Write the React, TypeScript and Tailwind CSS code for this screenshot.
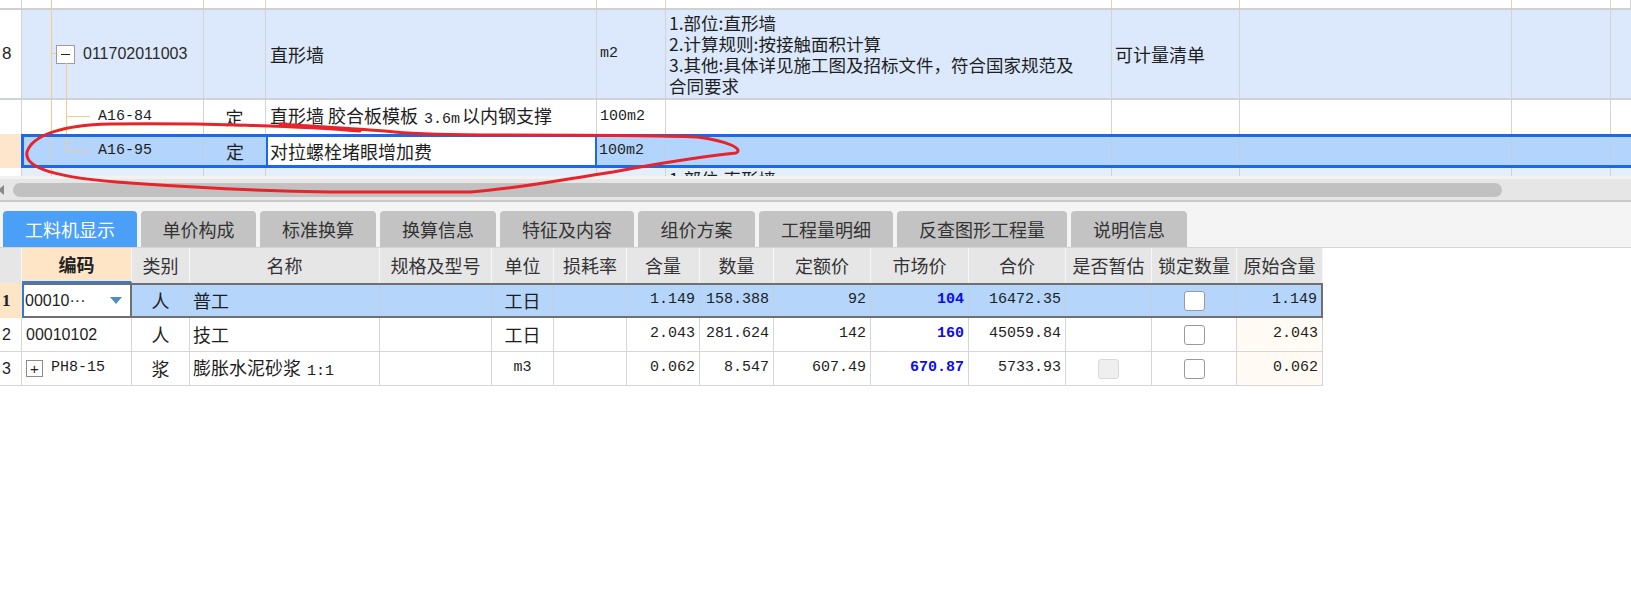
import React from "react";

const cjk = "font-['Noto_Sans_CJK_SC',sans-serif]";
const mono = "font-['Liberation_Mono',monospace] text-[15px]";
const sans = "font-['Liberation_Sans',sans-serif] text-[16px]";

const topCols = ["w-[22px]", "w-[182px]", "w-[62px]", "w-[331px]", "w-[69px]", "w-[446px]", "w-[128px]", "w-[272px]", "w-[99px]", "w-[20px]"];

const Orange = ({ className }: { className: string }) => <span className={`absolute bg-[#fbc98d] ${className}`} />;

function TopGrid() {
  return (
    <div className="text-[18px] text-[#1e1e1e]">
      {/* partial row on top */}
      <div className="flex h-[10px] border-b-2 border-[#d0d0d0]">
        {topCols.map((w, i) => (
          <div key={i} className={`${w} relative shrink-0 border-r border-[#d3d3d3]`}>
            {i === 1 && <Orange className="left-[29px] top-0 bottom-0 w-px" />}
          </div>
        ))}
      </div>

      {/* row 8 */}
      <div className="flex h-[90px] border-b-2 border-[#cfd3d8] bg-[#dce9fc]">
        <div className={`w-[22px] shrink-0 border-r border-[#d3d3d3] bg-white flex items-center pl-[2px] ${sans} text-[17px]`}>8</div>
        <div className="w-[182px] shrink-0 relative border-r border-[#d3d3d3] flex items-center pl-[34px]">
          <Orange className="left-[29px] top-0 bottom-0 w-px" />
          <Orange className="left-[29px] top-[43px] w-[5px] h-px" />
          <Orange className="left-[44px] top-[53px] bottom-0 w-px" />
          <span className="w-[19px] h-[19px] border border-[#9c9c9c] bg-white flex items-center justify-center">
            <span className="w-[9px] h-px bg-[#222]" />
          </span>
          <span className={`ml-[8px] ${sans} text-[#2a2a2a]`}>011702011003</span>
        </div>
        <div className="w-[62px] shrink-0 border-r border-[#d3d3d3]" />
        <div className="w-[331px] shrink-0 border-r border-[#d3d3d3] flex items-center pl-[4px]">直形墙</div>
        <div className={`w-[69px] shrink-0 border-r border-[#d3d3d3] flex items-center pl-[3px] ${mono}`}>m2</div>
        <div className="w-[446px] shrink-0 border-r border-[#d3d3d3] flex flex-col justify-center pl-[3px] text-[17.5px] leading-[21px]">
          <div>1.部位:直形墙</div>
          <div>2.计算规则:按接触面积计算</div>
          <div>3.其他:具体详见施工图及招标文件，符合国家规范及</div>
          <div>合同要求</div>
        </div>
        <div className="w-[128px] shrink-0 border-r border-[#d3d3d3] flex items-center pl-[3px]">可计量清单</div>
        <div className="w-[272px] shrink-0 border-r border-[#d3d3d3]" />
        <div className="w-[99px] shrink-0 border-r border-[#d3d3d3]" />
        <div className="w-[20px] shrink-0" />
      </div>

      {/* A16-84 */}
      <div className="flex h-[34px] bg-white">
        <div className="w-[22px] shrink-0 border-r border-[#d3d3d3]" />
        <div className={`w-[182px] shrink-0 relative border-r border-[#d3d3d3] flex items-center pl-[76px] ${mono}`}>
          <Orange className="left-[29px] top-0 bottom-0 w-px" />
          <Orange className="left-[44px] top-0 bottom-0 w-px" />
          <Orange className="left-[44px] top-[16px] w-[24px] h-px" />
          A16-84
        </div>
        <div className="w-[62px] shrink-0 border-r border-[#d3d3d3] flex items-center justify-center">定</div>
        <div className="w-[331px] shrink-0 border-r border-[#d3d3d3] flex items-center pl-[4px] whitespace-nowrap">
          <span>
            直形墙 胶合板模板 <span className={`${mono} mx-[2px]`}>3.6m</span>以内钢支撑
          </span>
        </div>
        <div className={`w-[69px] shrink-0 border-r border-[#d3d3d3] flex items-center pl-[3px] ${mono}`}>100m2</div>
        <div className="w-[446px] shrink-0 border-r border-[#d3d3d3]" />
        <div className="w-[128px] shrink-0 border-r border-[#d3d3d3]" />
        <div className="w-[272px] shrink-0 border-r border-[#d3d3d3]" />
        <div className="w-[99px] shrink-0 border-r border-[#d3d3d3]" />
        <div className="w-[20px] shrink-0" />
      </div>

      {/* selected A16-95 */}
      <div className="flex h-[34px]">
        <div className="w-[21px] shrink-0 bg-[#fde6cb]" />
        <div className="flex flex-1 border-y-[3px] border-l-[3px] border-[#1a6ae8] bg-[#b3d4fc]">
          <div className={`w-[180px] shrink-0 relative border-r border-[#c2cedd] flex items-center pl-[74px] ${mono}`}>
            <Orange className="left-[27px] top-0 bottom-0 w-px opacity-60" />
            <Orange className="left-[42px] top-0 h-[14px] w-px" />
            <Orange className="left-[42px] top-[14px] w-[24px] h-px" />
            A16-95
          </div>
          <div className="w-[62px] shrink-0 flex items-center justify-center">定</div>
          <div className="w-[331px] shrink-0 bg-white border-x-2 border-[#1a6ae8] flex items-center pl-[2px]">对拉螺栓堵眼增加费</div>
          <div className={`w-[69px] shrink-0 border-r border-[#c2cedd] flex items-center pl-[2px] ${mono}`}>100m2</div>
          <div className="w-[446px] shrink-0 border-r border-[#c2cedd]" />
          <div className="w-[128px] shrink-0 border-r border-[#c2cedd]" />
          <div className="w-[272px] shrink-0 border-r border-[#c2cedd]" />
          <div className="w-[99px] shrink-0 border-r border-[#c2cedd]" />
          <div className="flex-1" />
        </div>
      </div>

      {/* partial row below */}
      <div className="flex h-[8px] overflow-hidden">
        <div className="w-[22px] shrink-0 border-r border-[#d3d3d3] bg-white" />
        <div className="w-[182px] shrink-0 relative border-r border-[#d3d3d3] bg-[#e5effc]">
          <Orange className="left-[29px] top-0 bottom-0 w-px" />
        </div>
        <div className="w-[62px] shrink-0 border-r border-[#d3d3d3] bg-[#e5effc]" />
        <div className="w-[331px] shrink-0 border-r border-[#d3d3d3] bg-[#e5effc]" />
        <div className="w-[69px] shrink-0 border-r border-[#d3d3d3] bg-[#e5effc]" />
        <div className="w-[446px] shrink-0 border-r border-[#d3d3d3] bg-[#e5effc] pl-[3px] text-[17.5px] leading-[21px]">1.部位:直形墙</div>
        <div className="w-[128px] shrink-0 border-r border-[#d3d3d3] bg-[#e5effc]" />
        <div className="w-[272px] shrink-0 border-r border-[#d3d3d3] bg-[#e5effc]" />
        <div className="w-[99px] shrink-0 border-r border-[#d3d3d3] bg-[#e5effc]" />
        <div className="w-[20px] shrink-0 bg-[#e5effc]" />
      </div>

      {/* horizontal scrollbar */}
      <div className="h-[3px] bg-[#f2f2f2]" />
      <div className="h-[21px] bg-[#e6e6e6] flex items-center">
        <span className="-ml-[2px] w-0 h-0 border-y-[5px] border-y-transparent border-r-[6px] border-r-[#8a8a8a]" />
        <span className="ml-[9px] w-[1489px] h-[14px] rounded-full bg-[#c1c1c1]" />
      </div>
    </div>
  );
}

const tabs = ["工料机显示", "单价构成", "标准换算", "换算信息", "特征及内容", "组价方案", "工程量明细", "反查图形工程量", "说明信息"];
const tabW = ["w-[134px]", "w-[115px]", "w-[116px]", "w-[116px]", "w-[134px]", "w-[117px]", "w-[134px]", "w-[170px]", "w-[116px]"];

function Tabs() {
  return (
    <div className="border-t-2 border-[#c9c9c9] border-b border-b-[#d4d4d4] bg-[#f4f4f4] pt-[9px]">
      <div className="flex gap-[4px] pl-[3px]">
        {tabs.map((t, i) => (
          <div
            key={t}
            className={`${tabW[i]} h-[36px] rounded-t-[4px] flex items-center justify-center text-[18px] ${i === 0 ? "bg-[#4aa0f6] text-white" : "bg-[#c3c3c3] text-[#333]"}`}
          >
            {t}
          </div>
        ))}
      </div>
    </div>
  );
}

const Check = ({ disabled }: { disabled?: boolean }) => (
  <span className={`w-[21px] h-[20px] rounded-[3px] border ${disabled ? "border-[#d9d9d9] bg-[#efefef]" : "border-[#9a9a9a] bg-white"}`} />
);

const heads = ["编码", "类别", "名称", "规格及型号", "单位", "损耗率", "含量", "数量", "定额价", "市场价", "合价", "是否暂估", "锁定数量", "原始含量"];
const headW = ["w-[110px]", "w-[58px]", "w-[190px]", "w-[112px]", "w-[62px]", "w-[73px]", "w-[73px]", "w-[74px]", "w-[97px]", "w-[98px]", "w-[97px]", "w-[86px]", "w-[85px]", "w-[86px]"];

type Row = {
  n: string;
  code: React.ReactNode;
  kind: string;
  name: React.ReactNode;
  unit: React.ReactNode;
  qty: string;
  amount: string;
  base: string;
  market: string;
  total: string;
  est?: boolean;
  orig: string;
};

const rows: Row[] = [
  { n: "2", code: "00010102", kind: "人", name: "技工", unit: "工日", qty: "2.043", amount: "281.624", base: "142", market: "160", total: "45059.84", orig: "2.043" },
  {
    n: "3",
    code: (
      <span className="flex items-center">
        <span className="w-[17px] h-[17px] border border-[#8c8c8c] flex items-center justify-center text-[15px] leading-none">+</span>
        <span className={`ml-[8px] ${mono}`}>PH8-15</span>
      </span>
    ),
    kind: "浆",
    name: (
      <span>
        膨胀水泥砂浆 <span className={`${mono} ml-[2px]`}>1:1</span>
      </span>
    ),
    unit: <span className={mono}>m3</span>,
    qty: "0.062",
    amount: "8.547",
    base: "607.49",
    market: "670.87",
    total: "5733.93",
    est: true,
    orig: "0.062",
  },
];

const num = `${mono} flex items-center justify-end pr-[4px]`;

function BottomGrid() {
  return (
    <div className="w-[1323px] text-[18px] text-[#1e1e1e]">
      {/* header */}
      <div className="flex h-[35px] bg-[#e6e6e6] text-[#333]">
        <div className="w-[22px] shrink-0 border-r border-[#f7f7f7]" />
        {heads.map((h, i) => (
          <div
            key={h}
            className={`${headW[i]} shrink-0 border-r border-[#f7f7f7] flex items-center justify-center ${i === 0 ? "bg-[#fde5c6] font-bold border-b-2 border-b-[#2f7de0] text-[#222]" : ""}`}
          >
            {h}
          </div>
        ))}
      </div>

      {/* selected row 1 */}
      <div className="flex h-[35px]">
        <div className="w-[22px] shrink-0 bg-[#fde5c6] flex items-center pl-[2px] font-['Liberation_Serif',serif] font-bold text-[17px]">1</div>
        <div className="flex w-[1301px] border-2 border-[#6f6f6f] border-l-[#2a7ae2] bg-[#b5d5fb]">
          <div className={`w-[108px] shrink-0 bg-white border-r-2 border-[#6f6f6f] flex items-center pl-[1px] pr-[8px] justify-between ${sans}`}>
            <span>00010···</span>
            <span className="w-0 h-0 border-x-[6px] border-x-transparent border-t-[7px] border-t-[#4f8fc0]" />
          </div>
          <div className="w-[58px] shrink-0 border-r border-[#c2cfdd] flex items-center justify-center">人</div>
          <div className="w-[190px] shrink-0 border-r border-[#c2cfdd] flex items-center pl-[3px]">普工</div>
          <div className="w-[112px] shrink-0 border-r border-[#c2cfdd]" />
          <div className="w-[62px] shrink-0 border-r border-[#c2cfdd] flex items-center justify-center">工日</div>
          <div className="w-[73px] shrink-0 border-r border-[#c2cfdd]" />
          <div className={`w-[73px] shrink-0 border-r border-[#c2cfdd] ${num}`}>1.149</div>
          <div className={`w-[74px] shrink-0 border-r border-[#c2cfdd] ${num}`}>158.388</div>
          <div className={`w-[97px] shrink-0 border-r border-[#c2cfdd] ${num}`}>92</div>
          <div className={`w-[98px] shrink-0 border-r border-[#c2cfdd] ${num} font-bold text-[#0c0cf0]`}>104</div>
          <div className={`w-[97px] shrink-0 border-r border-[#c2cfdd] ${num}`}>16472.35</div>
          <div className="w-[86px] shrink-0 border-r border-[#c2cfdd]" />
          <div className="w-[85px] shrink-0 border-r border-[#c2cfdd] flex items-center justify-center">
            <Check />
          </div>
          <div className={`w-[84px] shrink-0 ${num} pr-[2px]`}>1.149</div>
        </div>
      </div>

      {rows.map((r) => (
        <div key={r.n} className="flex h-[34px] border-b border-[#d6d6d6] bg-white">
          <div className={`w-[22px] shrink-0 border-r border-[#d6d6d6] flex items-center pl-[2px] ${sans}`}>{r.n}</div>
          <div className={`w-[110px] shrink-0 border-r border-[#d6d6d6] flex items-center pl-[4px] ${sans}`}>{r.code}</div>
          <div className="w-[58px] shrink-0 border-r border-[#d6d6d6] flex items-center justify-center">{r.kind}</div>
          <div className="w-[190px] shrink-0 border-r border-[#d6d6d6] flex items-center pl-[3px] whitespace-nowrap">{r.name}</div>
          <div className="w-[112px] shrink-0 border-r border-[#d6d6d6]" />
          <div className="w-[62px] shrink-0 border-r border-[#d6d6d6] flex items-center justify-center">{r.unit}</div>
          <div className="w-[73px] shrink-0 border-r border-[#d6d6d6]" />
          <div className={`w-[73px] shrink-0 border-r border-[#d6d6d6] ${num}`}>{r.qty}</div>
          <div className={`w-[74px] shrink-0 border-r border-[#d6d6d6] ${num}`}>{r.amount}</div>
          <div className={`w-[97px] shrink-0 border-r border-[#d6d6d6] ${num}`}>{r.base}</div>
          <div className={`w-[98px] shrink-0 border-r border-[#d6d6d6] ${num} font-bold text-[#0c0cf0]`}>{r.market}</div>
          <div className={`w-[97px] shrink-0 border-r border-[#d6d6d6] ${num}`}>{r.total}</div>
          <div className="w-[86px] shrink-0 border-r border-[#d6d6d6] flex items-center justify-center">{r.est && <Check disabled />}</div>
          <div className="w-[85px] shrink-0 border-r border-[#d6d6d6] flex items-center justify-center">
            <Check />
          </div>
          <div className={`w-[86px] shrink-0 border-r border-[#d6d6d6] bg-[#fffaf3] ${num}`}>{r.orig}</div>
        </div>
      ))}
    </div>
  );
}

export default function App() {
  return (
    <div className={`relative w-[1631px] h-[612px] overflow-hidden bg-white ${cjk}`}>
      <TopGrid />
      <Tabs />
      <BottomGrid />

      {/* red hand-drawn annotation */}
      <svg className="absolute left-0 top-0 pointer-events-none" width="1631" height="612" viewBox="0 0 1631 612">
        <path
          d="M 360 131 C 300 126 200 123 110 124 C 60 125 32 136 27 152 C 24 168 55 178 130 183 C 200 188 260 191 330 192 L 470 192 C 525 188 565 179 613 172 C 650 165 690 158 736 153 C 744 149 728 141 697 137 C 650 135 560 135 500 135 C 450 135 415 134 395 132 C 365 129 320 127 280 124"
          fill="none"
          stroke="#e8232b"
          strokeWidth="3"
          strokeLinecap="round"
          strokeLinejoin="round"
        />
      </svg>
    </div>
  );
}
